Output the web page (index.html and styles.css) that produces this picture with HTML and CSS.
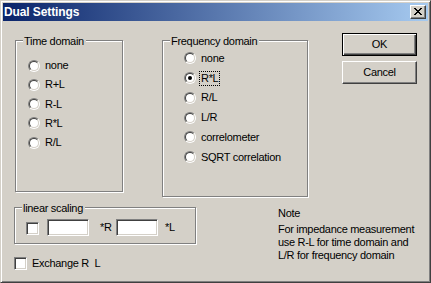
FILE: index.html
```html
<!DOCTYPE html>
<html>
<head>
<meta charset="utf-8">
<link rel="stylesheet" href="styles.css">
</head>
<body>
<div class="window">
  <div class="titlebar">
    <span class="title">Dual Settings</span>
    <div class="close">
      <svg width="8" height="7" viewBox="0 0 8 7" shape-rendering="crispEdges">
        <g fill="#000">
          <rect x="0" y="0" width="2" height="1"/><rect x="6" y="0" width="2" height="1"/>
          <rect x="1" y="1" width="2" height="1"/><rect x="5" y="1" width="2" height="1"/>
          <rect x="2" y="2" width="4" height="1"/>
          <rect x="3" y="3" width="2" height="1"/>
          <rect x="2" y="4" width="4" height="1"/>
          <rect x="1" y="5" width="2" height="1"/><rect x="5" y="5" width="2" height="1"/>
          <rect x="0" y="6" width="2" height="1"/><rect x="6" y="6" width="2" height="1"/>
        </g>
      </svg>
    </div>
  </div>
  <div class="client">
    <div class="top-row">
      <div class="group time">
        <div class="group-label">Time domain</div>
        <div class="radios time-radios">
          <div class="opt"><span class="radio"></span><span>none</span></div>
          <div class="opt"><span class="radio"></span><span>R+L</span></div>
          <div class="opt"><span class="radio"></span><span>R-L</span></div>
          <div class="opt"><span class="radio"></span><span>R*L</span></div>
          <div class="opt"><span class="radio"></span><span>R/L</span></div>
        </div>
      </div>
      <div class="group freq">
        <div class="group-label">Frequency domain</div>
        <div class="radios freq-radios">
          <div class="opt"><span class="radio"></span><span>none</span></div>
          <div class="opt"><span class="radio checked"></span><span class="focus">R*L</span></div>
          <div class="opt"><span class="radio"></span><span>R/L</span></div>
          <div class="opt"><span class="radio"></span><span>L/R</span></div>
          <div class="opt"><span class="radio"></span><span>correlometer</span></div>
          <div class="opt"><span class="radio"></span><span>SQRT correlation</span></div>
        </div>
      </div>
      <div class="buttons">
        <div class="btn default">OK</div>
        <div class="btn">Cancel</div>
      </div>
    </div>
    <div class="bottom-row">
      <div class="left-col">
        <div class="group linear">
          <div class="group-label">linear scaling</div>
          <div class="scale-row">
            <span class="check"></span>
            <span class="edit first"></span>
            <span class="unit">*R</span>
            <span class="edit"></span>
            <span class="unit last">*L</span>
          </div>
        </div>
        <div class="exchange"><span class="check"></span><span class="exchange-text">Exchange R&nbsp;&nbsp;L</span></div>
      </div>
      <div class="note">
        <p class="note-title">Note</p>
        <p>For impedance measurement<br>use R-L for time domain and<br>L/R for frequency domain</p>
      </div>
    </div>
  </div>
</div>
</body>
</html>
```
FILE: styles.css
```css
html, body {
  margin: 0;
  padding: 0;
  background: #d4d0c8;
}
body {
  font-family: "Liberation Sans", Arial, sans-serif;
  font-size: 11px;
  letter-spacing: -0.3px;
  color: #000;
  line-height: 13px;
}
.window {
  width: 431px;
  height: 283px;
  box-sizing: border-box;
  border: 1px solid;
  border-color: #d4d0c8 #404040 #404040 #d4d0c8;
  box-shadow: inset 1px 1px #fff, inset -1px -1px #808080;
  padding: 2px;
  background: #d4d0c8;
}
.titlebar {
  height: 18px;
  display: flex;
  align-items: center;
  background: linear-gradient(to right, #0a246a, #a6caf0);
  padding: 0 2px 0 0;
}
.title {
  flex: 1;
  color: #fff;
  font-size: 12px;
  font-weight: bold;
  letter-spacing: -0.1px;
  padding-left: 1px;
}
.close {
  width: 16px;
  height: 14px;
  box-sizing: border-box;
  background: #d4d0c8;
  border: 1px solid;
  border-color: #fff #404040 #404040 #fff;
  box-shadow: inset -1px -1px #808080;
  display: flex;
  align-items: center;
  justify-content: center;
}
.close svg {
  display: block;
  margin: 0 1px 1px 0;
}
.client {
  display: flex;
  flex-direction: column;
}
.top-row {
  display: flex;
  align-items: flex-start;
  height: 176px;
}
.group {
  box-sizing: border-box;
  border: 1px solid #808080;
  box-shadow: inset 1px 1px #fff, 1px 1px #fff;
}
.group-label {
  width: fit-content;
  margin: -6px 0 0 7px;
  padding: 0 2px 0 1px;
  background: #d4d0c8;
  line-height: 13px;
}
.time {
  margin: 19px 0 0 12px;
  width: 108px;
  height: 152px;
}
.freq {
  margin: 19px 0 0 39px;
  width: 146px;
  height: 157px;
}
.time-radios {
  padding: 8px 0 0 12px;
}
.time-radios .opt {
  height: 19.25px;
}
.freq-radios {
  padding: 0.5px 0 0 21px;
}
.freq-radios .opt {
  height: 19.75px;
}
.opt {
  display: flex;
  align-items: center;
  gap: 5px;
  white-space: nowrap;
}
.radio {
  flex: none;
  width: 12px;
  height: 12px;
  box-sizing: border-box;
  border-radius: 50%;
  border: 1px solid;
  border-color: #808080 #fff #fff #808080;
  display: flex;
  align-items: center;
  justify-content: center;
}
.radio::before {
  content: "";
  width: 10px;
  height: 10px;
  box-sizing: border-box;
  border-radius: 50%;
  border: 1px solid;
  border-color: #404040 #d4d0c8 #d4d0c8 #404040;
  background: #fff;
}
.radio.checked {
  position: relative;
}
.radio.checked::after {
  content: "";
  position: absolute;
  width: 4px;
  height: 4px;
  border-radius: 50%;
  background: #000;
}
.focus {
  border: 1px dotted #000;
  padding: 0 1px;
  margin: 0 -2px;
}
.buttons {
  margin: 12px 0 0 34px;
  width: 75px;
  display: flex;
  flex-direction: column;
  gap: 5px;
}
.btn {
  height: 23px;
  box-sizing: border-box;
  display: flex;
  align-items: center;
  justify-content: center;
  border: 1px solid;
  border-color: #fff #404040 #404040 #fff;
  box-shadow: inset -1px -1px #808080;
  background: #d4d0c8;
}
.btn.default {
  border-color: #000;
  box-shadow: inset 1px 1px #fff, inset -1px -1px #404040, inset -2px -2px #808080;
}
.bottom-row {
  display: flex;
  align-items: flex-start;
}
.left-col {
  margin-left: 11px;
  display: flex;
  flex-direction: column;
}
.linear {
  margin-top: 10px;
  width: 182px;
  height: 37px;
}
.scale-row {
  display: flex;
  align-items: flex-start;
  margin-top: 4px;
  padding-left: 11px;
  height: 17px;
  line-height: 17px;
}
.check {
  flex: none;
  width: 13px;
  height: 13px;
  box-sizing: border-box;
  border: 1px solid;
  border-color: #808080 #fff #fff #808080;
  box-shadow: inset 1px 1px #404040, inset -1px -1px #d4d0c8;
  background: #fff;
}
.scale-row .check {
  margin-top: 3px;
}
.edit {
  flex: none;
  width: 42px;
  height: 17px;
  box-sizing: border-box;
  border: 1px solid;
  border-color: #808080 #fff #fff #808080;
  box-shadow: inset 1px 1px #404040, inset -1px -1px #d4d0c8;
  background: #fff;
}
.edit.first {
  margin-left: 8px;
}
.unit {
  width: 16px;
  margin-left: 11px;
}
.unit.last {
  margin-left: 7px;
}
.exchange {
  margin-top: 13px;
  display: flex;
  align-items: center;
  gap: 5px;
  height: 13px;
  white-space: nowrap;
}
.note {
  margin: 10px 0 0 82px;
}
.note p {
  margin: 0;
  white-space: nowrap;
}
.note .note-title {
  margin-bottom: 3px;
}
```
